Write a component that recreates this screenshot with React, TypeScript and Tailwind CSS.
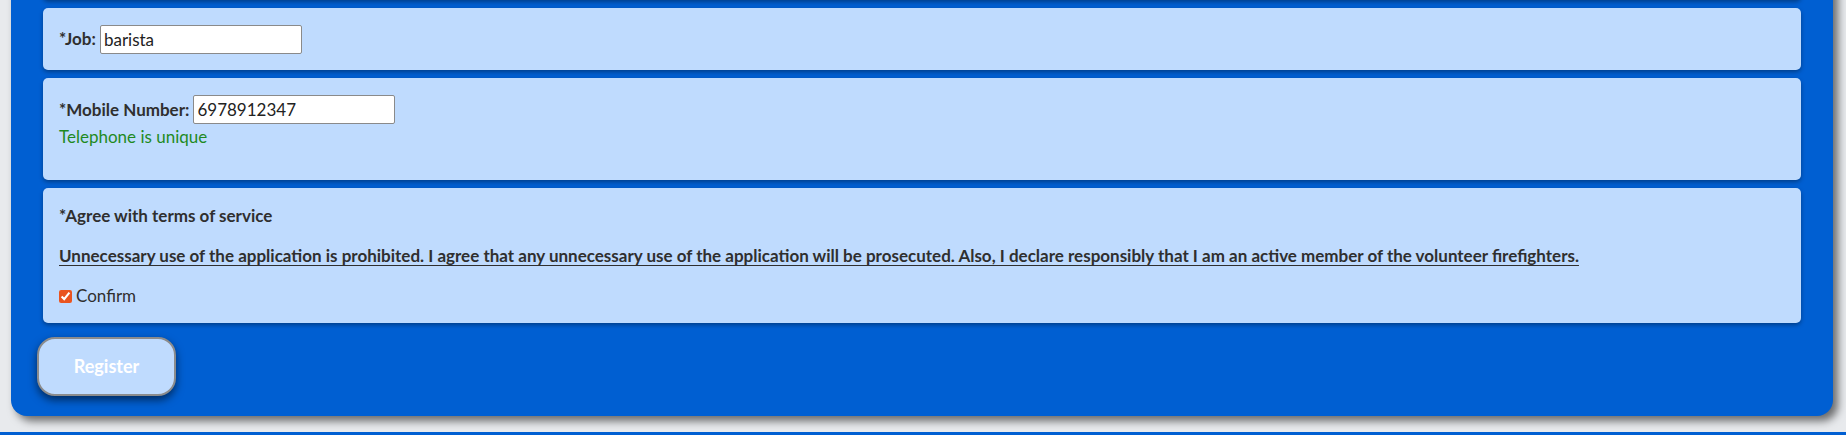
import { useState } from 'react'

const font = { fontFamily: 'Lato, "Noto Sans", "Liberation Sans", sans-serif' }

function Card({ children, className }: { children?: React.ReactNode; className?: string }) {
  return (
    <div
      className={
        'rounded-[5px] bg-[#bfdbfe] px-4 shadow-[0_2px_4px_rgba(0,0,0,0.35)] ' + (className ?? '')
      }
    >
      {children}
    </div>
  )
}

export default function App() {
  const [job, setJob] = useState('barista')
  const [phone, setPhone] = useState('6978912347')
  const [agree, setAgree] = useState(true)

  return (
    <div className="min-h-[435px] bg-[#e8eaed] text-[17px] text-[#2f2f2f]" style={font}>
      <div className="ml-[11px] mr-[13px] -mt-[48px] rounded-b-[16px] bg-[#005fd2] pb-[20px] shadow-[5px_5px_8px_rgba(0,0,0,0.55)]">
        <div className="flex flex-col gap-2 px-8">
          {/* tail of the previous field, only its shadow is on screen */}
          <Card className="h-[48px]" />

          <Card className="flex h-[62px] items-center">
            <label className="flex items-center gap-1">
              <span className="font-bold">*Job:</span>
              <input
                value={job}
                onChange={(e) => setJob(e.target.value)}
                className="h-[29px] w-[202px] rounded-[2px] border border-[#8a8a8a] bg-white px-[3px] text-[17px] text-[#222] outline-none"
              />
            </label>
          </Card>

          <Card className="h-[102px] pt-[17px]">
            <label className="flex items-center gap-1">
              <span className="font-bold">*Mobile Number:</span>
              <input
                value={phone}
                onChange={(e) => setPhone(e.target.value)}
                className="h-[29px] w-[202px] rounded-[2px] border border-[#8a8a8a] bg-white px-[3px] text-[17px] text-[#222] outline-none"
              />
            </label>
            <p className="mt-[3px] leading-[20px] text-[#1f8a1f]">Telephone is unique</p>
          </Card>

          <Card className="h-[135px] pt-[16px]">
            <p className="font-bold leading-[24px]">*Agree with terms of service</p>
            <p className="mt-[16px] font-bold leading-[24px] underline underline-offset-[3px]">
              Unnecessary use of the application is prohibited. I agree that any unnecessary use of the
              application will be prosecuted. Also, I declare responsibly that I am an active member of the
              volunteer firefighters.
            </p>
            <label className="mt-[18px] flex items-center gap-[4px] leading-[20px]">
              <input
                type="checkbox"
                checked={agree}
                onChange={(e) => setAgree(e.target.checked)}
                className="m-0 h-[13px] w-[13px] accent-[#e95420]"
              />
              <span>Confirm</span>
            </label>
          </Card>
        </div>

        <button className="ml-[26px] mt-[14px] h-[59px] w-[139px] rounded-[18px] border-2 border-[#8c8c8c] bg-[#bfdbfe] text-[18px] font-bold text-white shadow-[0_4px_8px_rgba(0,0,0,0.55)]">
          Register
        </button>
      </div>

      <div className="mt-[16px] h-[3px] bg-[#005fd2]" />
    </div>
  )
}
